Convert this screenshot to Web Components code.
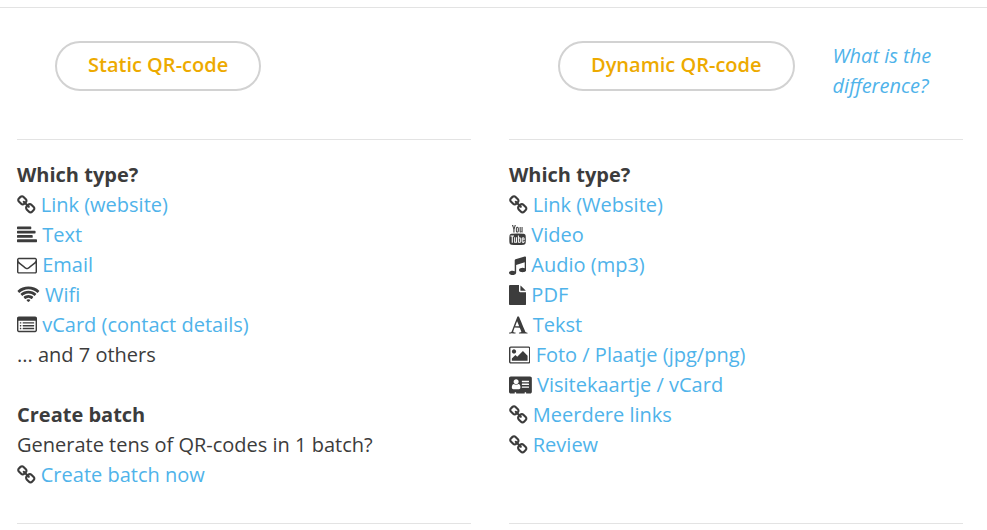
<!DOCTYPE html>
<html>
<head>
<meta charset="utf-8">
<title>QR-code</title>
<style>
  html, body { margin: 0; background: #fff; }
  body { font: 20px/30px "Open Sans", sans-serif; color: #3c3c3c; overflow: hidden; }
</style>
</head>
<body>
<qr-page>
  <qr-column>
    <div slot="header">
      <pill-button>Static QR-code</pill-button>
    </div>
    <b-title>Which type?</b-title>
    <type-row icon="link">Link (website)</type-row>
    <type-row icon="text">Text</type-row>
    <type-row icon="mail">Email</type-row>
    <type-row icon="wifi">Wifi</type-row>
    <type-row icon="list">vCard (contact details)</type-row>
    <plain-line>... and 7 others</plain-line>
    <plain-line>&nbsp;</plain-line>
    <b-title>Create batch</b-title>
    <plain-line>Generate tens of QR-codes in 1 batch?</plain-line>
    <type-row icon="link">Create batch now</type-row>
  </qr-column>
  <qr-column variant="dynamic">
    <div slot="header">
      <pill-button>Dynamic QR-code</pill-button>
      <help-link>What is the difference?</help-link>
    </div>
    <b-title>Which type?</b-title>
    <type-row icon="link">Link (Website)</type-row>
    <type-row icon="youtube">Video</type-row>
    <type-row icon="music">Audio (mp3)</type-row>
    <type-row icon="file">PDF</type-row>
    <type-row icon="font">Tekst</type-row>
    <type-row icon="picture">Foto / Plaatje (jpg/png)</type-row>
    <type-row icon="card">Visitekaartje / vCard</type-row>
    <type-row icon="link">Meerdere links</type-row>
    <type-row icon="link">Review</type-row>
  </qr-column>
</qr-page>

<script>
// icons use 1792 units per 20px: [left edge, width in units, path]
const ICONS = {
  link: [0, 1664, 'M1456 1216q0-40-28-68l-208-208q-28-28-68-28-42 0-72 32 3 3 19 18.5t21.5 21.5 15 19 13 25.5 3.5 27.5q0 40-28 68t-68 28q-15 0-27.5-3.5t-25.5-13-19-15-21.5-21.5-18.5-19q-33 31-33 73 0 40 28 68l206 207q27 27 68 27 40 0 68-26l147-146q28-28 28-67zm-703-705q0-40-28-68l-206-207q-28-28-68-28-39 0-68 27l-147 146q-28 28-28 67 0 40 28 68l208 208q27 27 68 27 42 0 72-31-3-3-19-18.5t-21.5-21.5-15-19-13-25.5-3.5-27.5q0-40 28-68t68-28q15 0 27.5 3.5t25.5 13 19 15 21.5 21.5 18.5 19q33-31 33-73zm895 705q0 120-85 203l-147 146q-83 83-203 83-121 0-204-85l-206-207q-83-83-83-203 0-123 88-209l-88-88q-86 88-208 88-120 0-204-84l-208-208q-84-84-84-204t85-203l147-146q83-83 203-83 121 0 204 85l206 207q83 83 83 203 0 123-88 209l88 88q86-88 208-88 120 0 204 84l208 208q84 84 84 204z'],
  text: [0, 1792, 'M1792 1344v128q0 26-19 45t-45 19h-1664q-26 0-45-19t-19-45v-128q0-26 19-45t45-19h1664q26 0 45 19t19 45zm-384-384v128q0 26-19 45t-45 19h-1280q-26 0-45-19t-19-45v-128q0-26 19-45t45-19h1280q26 0 45 19t19 45zm256-384v128q0 26-19 45t-45 19h-1536q-26 0-45-19t-19-45v-128q0-26 19-45t45-19h1536q26 0 45 19t19 45zm-384-384v128q0 26-19 45t-45 19h-1152q-26 0-45-19t-19-45v-128q0-26 19-45t45-19h1152q26 0 45 19t19 45z'],
  mail: [0, 1792, 'M1664 1504v-768q-32 36-69 66-268 206-426 338-51 43-83 67t-86.5 48.5-102.5 24.5h-2q-48 0-102.5-24.5t-86.5-48.5-83-67q-158-132-426-338-37-30-69-66v768q0 13 9.5 22.5t22.5 9.5h1472q13 0 22.5-9.5t9.5-22.5zm0-1051v-24.5l-.5-13-3-12.5-5.5-9-9-7.5-14-2.5h-1472q-13 0-22.5 9.5t-9.5 22.5q0 168 147 284 193 152 401 317 6 5 35 29.5t46 37.5 44.5 31.5 50.5 27.5 43 9h2q20 0 43-9t50.5-27.5 44.5-31.5 46-37.5 35-29.5q208-165 401-317 54-43 100.5-115.5t46.5-131.5zm128-37v1088q0 66-47 113t-113 47h-1472q-66 0-113-47t-47-113v-1088q0-66 47-113t113-47h1472q66 0 113 47t47 113z'],
  wifi: [0, 2048, 'M1024 1523q-20 0-93-73.5t-73-93.5q0-32 62.5-54t103.5-22 103.5 22 62.5 54q0 20-73 93.5t-93 73.5zm270-271q-2 0-40-25t-101.5-50-128.5-25-128.5 25-101 50-40.5 25q-18 0-93.5-75t-75.5-93q0-13 10-23 78-77 196-121t233-44 233 44 196 121q10 10 10 23 0 18-75.5 93t-93.5 75zm273-272q-11 0-23-8-136-105-252-154.5t-268-49.5q-85 0-170.5 22t-149 53-113.5 62-79 53-31 22q-17 0-92-75t-75-93q0-12 10-22 132-132 320-205t380-73 380 73 320 205q10 10 10 22 0 18-75 93t-92 75zm271-271q-11 0-22-9-179-157-371.5-236.5t-420.5-79.5-420.5 79.5-371.5 236.5q-11 9-22 9-17 0-92.5-75t-75.5-93q0-13 10-23 187-186 445-288t527-102 527 102 445 288q10 10 10 23 0 18-75.5 93t-92.5 75z'],
  list: [0, 1792, 'M384 1184v64q0 13-9.5 22.5t-22.5 9.5h-64q-13 0-22.5-9.5t-9.5-22.5v-64q0-13 9.5-22.5t22.5-9.5h64q13 0 22.5 9.5t9.5 22.5zm0-256v64q0 13-9.5 22.5t-22.5 9.5h-64q-13 0-22.5-9.5t-9.5-22.5v-64q0-13 9.5-22.5t22.5-9.5h64q13 0 22.5 9.5t9.5 22.5zm0-256v64q0 13-9.5 22.5t-22.5 9.5h-64q-13 0-22.5-9.5t-9.5-22.5v-64q0-13 9.5-22.5t22.5-9.5h64q13 0 22.5 9.5t9.5 22.5zm1152 512v64q0 13-9.5 22.5t-22.5 9.5h-960q-13 0-22.5-9.5t-9.5-22.5v-64q0-13 9.5-22.5t22.5-9.5h960q13 0 22.5 9.5t9.5 22.5zm0-256v64q0 13-9.5 22.5t-22.5 9.5h-960q-13 0-22.5-9.5t-9.5-22.5v-64q0-13 9.5-22.5t22.5-9.5h960q13 0 22.5 9.5t9.5 22.5zm0-256v64q0 13-9.5 22.5t-22.5 9.5h-960q-13 0-22.5-9.5t-9.5-22.5v-64q0-13 9.5-22.5t22.5-9.5h960q13 0 22.5 9.5t9.5 22.5zm128 704v-832q0-13-9.5-22.5t-22.5-9.5h-1472q-13 0-22.5 9.5t-9.5 22.5v832q0 13 9.5 22.5t22.5 9.5h1472q13 0 22.5-9.5t9.5-22.5zm128-1088v1088q0 66-47 113t-113 47h-1472q-66 0-113-47t-47-113v-1088q0-66 47-113t113-47h1472q66 0 113 47t47 113z'],
  youtube: [128, 1536, 'M1099 1244v211q0 67-39 67-23 0-45-22v-301q22-22 45-22 39 0 39 67zm338 1v46h-90v-46q0-68 45-68t45 68zm-966-218h107v-94h-312v94h105v569h100v-569zm288 569h89v-494h-89v378q-30 42-57 42-18 0-21-21-1-3-1-35v-364h-89v391q0 49 8 73 12 37 58 37 48 0 102-61v54zm429-148v-197q0-73-9-99-17-56-71-56-50 0-93 54v-217h-89v663h89v-48q45 55 93 55 54 0 71-55 9-27 9-100zm338-10v-13h-91q0 51-2 61-7 36-40 36-46 0-46-69v-87h179v-103q0-79-27-116-39-51-106-51-68 0-107 51-28 37-28 116v173q0 79 29 116 39 51 108 51 72 0 108-53 18-27 21-54 2-9 2-58zm-608-913v-210q0-69-43-69t-43 69v210q0 70 43 70t43-70zm719 751q0 234-26 350-14 59-58 99t-102 46q-184 21-555 21t-555-21q-58-6-102.5-46t-57.5-99q-26-112-26-350 0-234 26-350 14-59 58-99t103-47q183-20 554-20t555 20q58 7 102.5 47t57.5 99q26 112 26 350zm-998-1276h102l-121 399v271h-100v-271q-14-74-61-212-37-103-65-187h106l71 263zm370 333v175q0 81-28 118-37 51-106 51-67 0-105-51-28-38-28-118v-175q0-80 28-117 38-51 105-51 69 0 106 51 28 37 28 117zm335-162v499h-91v-55q-53 62-103 62-46 0-59-37-8-24-8-75v-394h91v367q0 33 1 35 3 22 21 22 27 0 57-43v-381h91z'],
  music: [128, 1536, 'M1664 224v1120q0 50-34 89t-86 60.5-103.5 32-96.5 10.5-96.5-10.5-103.5-32-86-60.5-34-89 34-89 86-60.5 103.5-32 96.5-10.5q105 0 192 39v-537l-768 237v709q0 50-34 89t-86 60.5-103.5 32-96.5 10.5-96.5-10.5-103.5-32-86-60.5-34-89 34-89 86-60.5 103.5-32 96.5-10.5q105 0 192 39v-967q0-31 19-56.5t49-35.5l832-256q12-4 28-4 40 0 68 28t28 68z'],
  file: [128, 1536, 'M1152 512v-472q22 14 36 28l408 408q14 14 28 36h-472zm-128 32q0 40 28 68t68 28h544v1056q0 40-28 68t-68 28h-1344q-40 0-68-28t-28-68v-1600q0-40 28-68t68-28h800v544z'],
  font: [64, 1664, 'M789 559l-170 450q33 0 136.5 2t160.5 2q19 0 57-2-87-253-184-452zm-725 1105l2-79q23-7 56-12.5t57-10.5 49.5-14.5 44.5-29 31-50.5l237-616 280-724h128q8 14 11 21l205 480q33 78 106 257.5t114 274.5q15 34 58 144.5t72 168.5q20 45 35 57 19 15 88 29.5t84 20.5q6 38 6 57 0 5-.5 13.5t-.5 12.5q-63 0-190-8t-191-8q-76 0-215 7t-178 8q0-43 4-78l131-28q1 0 12.5-2.5t15.5-3.5 14.5-4.5 15-6.5 11-8 9-11 2.5-14q0-16-31-96.5t-72-177.5-42-100l-450-2q-26 58-76.5 195.5t-50.5 162.5q0 22 14 37.5t43.5 24.5 48.5 13.5 57 8.5 41 4q1 19 1 58 0 9-2 27-58 0-174.5-10t-174.5-10q-8 0-26.5 4t-21.5 4q-80 14-188 14z'],
  picture: [-64, 1920, 'M576 576q0 80-56 136t-136 56-136-56-56-136 56-136 136-56 136 56 56 136zm1024 384v448h-1408v-192l320-320 160 160 512-512zm96-704h-1600q-13 0-22.5 9.5t-9.5 22.5v1216q0 13 9.5 22.5t22.5 9.5h1600q13 0 22.5-9.5t9.5-22.5v-1216q0-13-9.5-22.5t-22.5-9.5zm160 32v1216q0 66-47 113t-113 47h-1600q-66 0-113-47t-47-113v-1216q0-66 47-113t113-47h1600q66 0 113 47t47 113z'],
  card: [0, 2048, 'M1024 1131q0-64-9-117.5t-29.5-103-60.5-78-97-28.5q-6 4-30 18t-37.5 21.5-35.5 17.5-43 14.5-42 4.5-42-4.5-43-14.5-35.5-17.5-37.5-21.5-30-18q-57 0-97 28.5t-60.5 78-29.5 103-9 117.5 37 106.5 91 42.5h512q54 0 91-42.5t37-106.5zm-157-520q0-94-66.5-160.5t-160.5-66.5-160.5 66.5-66.5 160.5 66.5 160.5 160.5 66.5 160.5-66.5 66.5-160.5zm925 509v-64q0-14-9-23t-23-9h-576q-14 0-23 9t-9 23v64q0 14 9 23t23 9h576q14 0 23-9t9-23zm0-260v-56q0-15-10.5-25.5t-25.5-10.5h-568q-15 0-25.5 10.5t-10.5 25.5v56q0 15 10.5 25.5t25.5 10.5h568q15 0 25.5-10.5t10.5-25.5zm0-252v-64q0-14-9-23t-23-9h-576q-14 0-23 9t-9 23v64q0 14 9 23t23 9h576q14 0 23-9t9-23zm256-320v1216q0 66-47 113t-113 47h-352v-96q0-14-9-23t-23-9h-64q-14 0-23 9t-9 23v96h-768v-96q0-14-9-23t-23-9h-64q-14 0-23 9t-9 23v96h-352q-66 0-113-47t-47-113v-1216q0-66 47-113t113-47h1728q66 0 113 47t47 113z']
};

class QrPage extends HTMLElement {
  constructor() {
    super();
    this.attachShadow({ mode: 'open' });
    this.shadowRoot.innerHTML = `
      <style>
        :host { display: block; margin-top: 7px; height: 523px; box-sizing: border-box; border-top: 1px solid #e3e3e3; }
        .cols { display: grid; grid-template-columns: 454px 454px; column-gap: 38px; padding-left: 17px; height: 100%; }
      </style>
      <div class="cols"><slot></slot></div>
    `;
  }
}

class QrColumn extends HTMLElement {
  constructor() {
    super();
    this.attachShadow({ mode: 'open' });
    this.shadowRoot.innerHTML = `
      <style>
        :host { display: flex; flex-direction: column; height: 516px; box-sizing: border-box; }
        .head { height: 132px; box-sizing: border-box; padding: 33px 0 0 38px; border-bottom: 1px solid #e3e3e3; }
        :host([variant="dynamic"]) .head { padding-left: 49px; }
        .body { flex: 1; padding-top: 20px; }
        .foot { border-top: 1px solid #e3e3e3; }
        ::slotted([slot="header"]) { display: flex; gap: 38px; align-items: flex-start; }
      </style>
      <div class="head"><slot name="header"></slot></div>
      <div class="body"><slot></slot></div>
      <div class="foot"></div>
    `;
  }
}

class PillButton extends HTMLElement {
  constructor() {
    super();
    this.attachShadow({ mode: 'open' });
    this.shadowRoot.innerHTML = `
      <style>
        :host {
          display: block; flex: none; height: 50px; box-sizing: border-box;
          padding: 0 31px; border: 2px solid #d2d2d2; border-radius: 25px;
          color: #edaa00; font-weight: 600; line-height: 44px; white-space: nowrap;
        }
      </style>
      <slot></slot>
    `;
  }
}

class HelpLink extends HTMLElement {
  constructor() {
    super();
    this.attachShadow({ mode: 'open' });
    this.shadowRoot.innerHTML = `
      <style>
        :host { display: block; width: 130px; color: #4fb3ea; font-style: italic; }
      </style>
      <slot></slot>
    `;
  }
}

class BTitle extends HTMLElement {
  constructor() {
    super();
    this.attachShadow({ mode: 'open' });
    this.shadowRoot.innerHTML = `
      <style>:host { display: block; font-weight: 700; }</style>
      <slot></slot>
    `;
  }
}

class PlainLine extends HTMLElement {
  constructor() {
    super();
    this.attachShadow({ mode: 'open' });
    this.shadowRoot.innerHTML = `
      <style>:host { display: block; }</style>
      <slot></slot>
    `;
  }
}

class TypeRow extends HTMLElement {
  constructor() {
    super();
    this.attachShadow({ mode: 'open' });
  }

  connectedCallback() {
    const [x, w, d] = ICONS[this.getAttribute('icon')];
    // the svg is as tall as the text line; the icon's em starts 5px down
    this.shadowRoot.innerHTML = `
      <style>
        :host { display: block; height: 30px; white-space: nowrap; }
        svg { vertical-align: top; fill: currentColor; }
        .label { color: #4fb3ea; }
      </style>
      <svg width="${w / 89.6}" height="30" viewBox="${x} -448 ${w} 2688"><path d="${d}"/></svg> <span class="label"><slot></slot></span>
    `;
  }
}

customElements.define('qr-page', QrPage);
customElements.define('qr-column', QrColumn);
customElements.define('pill-button', PillButton);
customElements.define('help-link', HelpLink);
customElements.define('b-title', BTitle);
customElements.define('plain-line', PlainLine);
customElements.define('type-row', TypeRow);
</script>
</body>
</html>
